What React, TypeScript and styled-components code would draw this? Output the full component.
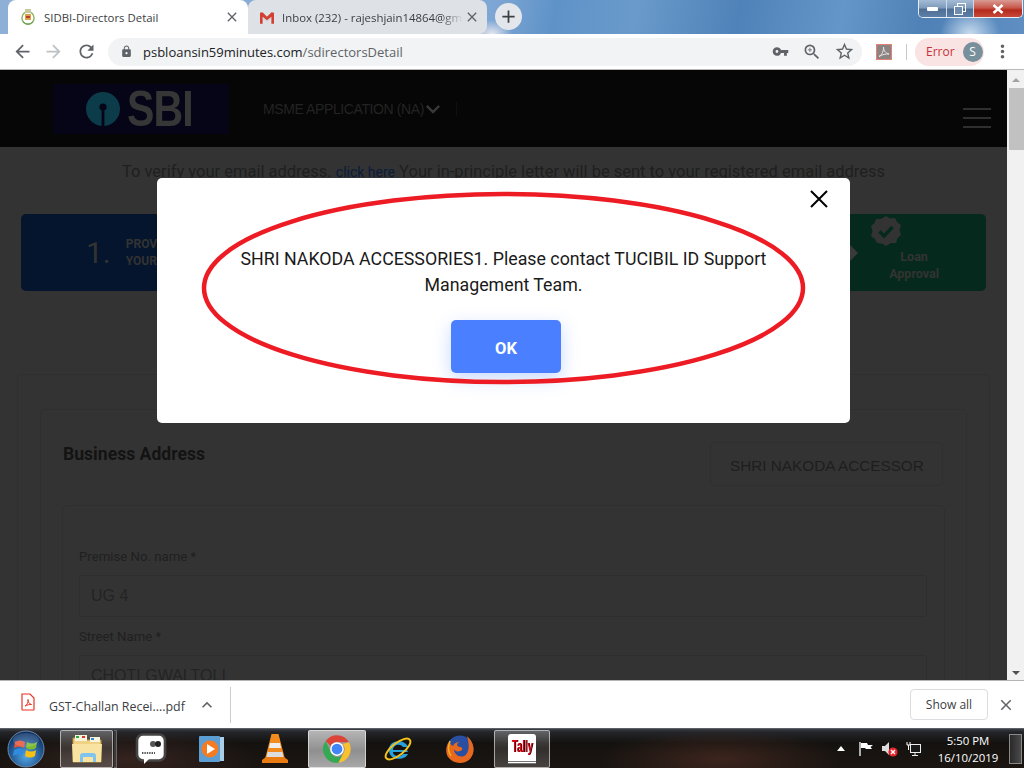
import React from 'react';
import styled, { createGlobalStyle } from 'styled-components';
import { MdArrowBack, MdArrowForward, MdRefresh, MdLock, MdVpnKey, MdZoomIn, MdStarBorder, MdMoreVert, MdClose, MdAdd, MdExpandLess, MdExpandMore } from 'react-icons/md';

const Global = createGlobalStyle`
  html, body { margin: 0; padding: 0; width: 1024px; height: 768px; overflow: hidden; background: #fff; }
  * { box-sizing: border-box; }
`;

const Screen = styled.div`
  width: 1024px; height: 768px; display: flex; flex-direction: column; overflow: hidden;
  font-family: Roboto, "Liberation Sans", sans-serif;
`;

/* ---------- tab strip ---------- */
const TabStrip = styled.div`
  height: 34px; flex: none; display: flex; align-items: flex-start; padding-left: 8px;
  background:
    radial-gradient(ellipse 30px 26px at 970px 34px, #c9dcef 0%, rgba(201,220,239,0) 100%),
    radial-gradient(ellipse 20px 14px at 492px 34px, #e6e6ee 0%, rgba(230,230,238,0) 100%),
    linear-gradient(100deg, #8fb0d6 0%, #8fb0d6 3%, #7ea6d4 48%, #5f93c8 54%, #6a9acb 62%, #4f82b8 72%, #6496c9 82%, #4f81b6 90%, #5f8fc2 100%);
`;
const Tab = styled.div<{ $active?: boolean }>`
  width: ${p => (p.$active ? 240 : 239)}px; height: 34px; display: flex; align-items: center;
  padding: 0 ${p => (p.$active ? 7 : 6)}px 0 ${p => (p.$active ? 13 : 12)}px;
  background: ${p => (p.$active ? '#fff' : '#dee1e6')};
  border-radius: 8px 8px ${p => (p.$active ? '0 0' : '8px 0')};
  flex: none;
`;
const TabIcon = styled.span<{ $gap: number }>`
  width: 16px; height: 18px; flex: none; display: flex; align-items: center; margin-right: ${p => p.$gap}px;
  svg { display: block; }
`;
const TabTitle = styled.span<{ $fade?: boolean }>`
  flex: 1; min-width: 0; white-space: nowrap; overflow: hidden; font: 11.4px "Open Sans", "Noto Sans", sans-serif; color: #3c4043;
  ${p => p.$fade ? 'mask-image: linear-gradient(90deg, #000 88%, transparent 100%);' : ''}
`;
const TabClose = styled.span`
  width: 18px; height: 18px; display: flex; align-items: center; justify-content: center; color: #5f6368; font-size: 16px; flex: none;
`;
const NewTab = styled.span`
  width: 27px; height: 27px; border-radius: 50%; background: #e3e6ea; color: #3c4043; display: flex; align-items: center; justify-content: center;
  font-size: 21px; margin: 3px 0 0 8px;
`;
const CaptionGroup = styled.div`
  margin: 0 1px 0 auto; height: 18px; width: 105px; display: flex; border: 1px solid #e8eef5; border-top: none; border-radius: 0 0 5px 5px; overflow: hidden;
`;
const CaptionButton = styled.span<{ $close?: boolean; $w: number }>`
  width: ${p => p.$w}px; flex: none; display: flex; align-items: center; justify-content: center; color: #fff;
  background: ${p => p.$close ? 'linear-gradient(#d99b93 0%, #c85a4d 45%, #b52a1c 60%, #c64a3a 100%)' : 'linear-gradient(#a4bcd6 0%, #7f9cbc 45%, #4f6f95 55%, #5d7ea6 100%)'};
  border-right: ${p => p.$close ? 'none' : '1px solid #cfdbe8'};
`;

/* ---------- toolbar ---------- */
const Toolbar = styled.div`
  height: 36px; flex: none; display: flex; align-items: center; background: #fff; border-bottom: 1px solid #b8b8b8;
`;
const NavButton = styled.span<{ $c?: string; $w?: number; $pl?: number }>`
  width: ${p => p.$w ?? 31}px; padding-left: ${p => p.$pl ?? 0}px; flex: none; display: flex; align-items: center; justify-content: center; font-size: 21px; color: ${p => p.$c ?? '#5f6368'};
`;
const Omnibox = styled.div`
  width: 754px; height: 28px; margin-left: 4px; flex: none; background: #f1f3f4; border-radius: 14px; display: flex; align-items: center; padding: 0 2px 0 10px;
`;
const LockIcon = styled.span`
  width: 16px; display: flex; justify-content: center; font-size: 13px; color: #5f6368; margin: 0 9px 0 0;
`;
const UrlText = styled.span`
  flex: 1; font: 13px "Open Sans", "Noto Sans", sans-serif; color: #202124; white-space: nowrap; padding-top: 1px;
  em { font-style: normal; color: #5f6368; }
`;
const OmniIcon = styled.span<{ $s?: number }>`
  width: 32px; flex: none; display: flex; align-items: center; justify-content: center; font-size: ${p => p.$s ?? 20}px; color: #5f6368;
`;
const ToolbarDivider = styled.span`
  width: 1px; height: 16px; background: #c9c9c9; flex: none; margin: 0 8px 0 14px;
`;
const PdfExt = styled.span`
  width: 16px; height: 16px; flex: none; margin-left: 14px; svg { display: block; }
`;
const ErrorPill = styled.div`
  width: 69px; height: 28px; flex: none; border-radius: 14px; background: #fae3e3; display: flex; align-items: center; padding-left: 11px; gap: 8px;
  font: 12px "Open Sans", "Noto Sans", sans-serif; color: #c5323a;
`;
const Avatar = styled.span`
  width: 20px; height: 20px; border-radius: 50%; background: #78909c; color: #fff; font-size: 12px; display: flex; align-items: center; justify-content: center;
`;

/* ---------- viewport ---------- */
const Viewport = styled.div`
  flex: 1; min-height: 0; display: flex; position: relative; overflow: hidden;
`;
const Page = styled.div`
  width: 1007px; flex: none; background: #333; overflow: hidden; display: flex; flex-direction: column;
`;
const SiteHeader = styled.div`
  height: 77px; flex: none; background: #060606; display: flex; align-items: center; padding: 0 16px 0 53px;
`;
const Logo = styled.div`
  width: 176px; height: 50px; flex: none; background: #050517; display: flex; align-items: center; padding-left: 33px; gap: 7px;
  font: 700 50px/50px "Liberation Sans", sans-serif; color: #363636; letter-spacing: -1px;
  svg { display: block; flex: none; }
  span { display: inline-block; transform: scaleX(.82); transform-origin: left center; }
`;
const AppMenu = styled.div`
  margin-left: 34px; display: flex; align-items: center; font: 14px "Liberation Sans", sans-serif; color: #232323; letter-spacing: -.4px;
  svg { font-size: 28px; margin-left: -5px; color: #383838; }
`;
const MenuRule = styled.span`
  width: 1px; height: 14px; background: #101010; margin-left: 9px; flex: none;
`;
const Burger = styled.div`
  margin: 18px 0 0 auto; width: 28px; display: flex; flex-direction: column; gap: 7px;
  i { display: block; height: 2px; background: #2f2f2f; }
`;
const Notice = styled.div`
  height: 67px; flex: none; padding-top: 15px; text-align: center; font-size: 16.5px; line-height: 20px; color: #1f1f1f;
  a { color: #0a1c38; font-size: 14px; }
`;
const Steps = styled.div`
  height: 77px; flex: none; margin: 0 21px; display: flex;
`;
const StepBlue = styled.div`
  width: 500px; flex: none; background: #05152d; border-radius: 5px 0 0 5px; display: flex; align-items: center; padding-left: 65px;
`;
const StepNo = styled.span`
  font-size: 30px; color: #333; margin-right: 15px;
`;
const StepText = styled.span`
  font-size: 12px; line-height: 17px; font-weight: 700; color: #333; white-space: nowrap;
`;
const StepGreen = styled.div`
  flex: 1; background: #06291d; border-radius: 0 5px 5px 0; position: relative; display: flex; flex-direction: column; align-items: flex-end; padding: 2px 47px 0 0;
`;
const Arrow = styled.span`
  position: absolute; left: 329px; top: 31px; width: 0; height: 0; border-left: 8px solid #3a3a3a; border-top: 8.5px solid transparent; border-bottom: 8.5px solid transparent;
`;
const Badge = styled.span`
  display: block; height: 30px; width: 100%; padding-left: 350px; svg { display: block; }
`;
const ApprovalText = styled.span`
  font-size: 12.5px; line-height: 17px; font-weight: 700; color: #333; text-align: center; margin-top: 2px;
`;
const OuterCard = styled.div`
  margin: 83px 17px 0; flex: 1; border: 1px solid #2f2f2f; border-radius: 5px 5px 0 0; padding: 34px 22px 0;
`;
const InnerCard = styled.div`
  height: 400px; border: 1px solid #2f2f2f; border-radius: 5px 5px 0 0; padding: 0 22px;
`;
const CardHead = styled.div`
  height: 95px; display: flex; justify-content: space-between; align-items: flex-start; padding-top: 32px;
`;
const CardTitle = styled.h2`
  margin: 1px 0 0; font-size: 17.6px; font-weight: 700; line-height: 22px; color: #131313;
`;
const CompanySelect = styled.div`
  width: 233px; height: 44px; border: 1px solid #2f2f2f; border-radius: 5px; margin-right: 1px; padding: 0 19px;
`;
const SelectValue = styled.div`
  height: 42px; font: 15.3px/46px "Liberation Sans", sans-serif; color: #1e1e1e; white-space: nowrap; overflow: hidden;
`;
const AddressCard = styled.div`
  border: 1px solid #2f2f2f; border-radius: 5px 5px 0 0; height: 300px; margin: 0 -1px; padding: 43px 17px 0 16px;
`;
const Label = styled.label`
  display: block; font-size: 13.2px; line-height: 16px; color: #202020; margin-bottom: 10px;
`;
const Field = styled.div`
  height: 42px; border: 1px solid #2e2e2e; border-radius: 3px; padding: 0 11px; font: 16px/39px "Liberation Sans", sans-serif; color: #232323; margin-bottom: 12px;
`;
const Scrollbar = styled.div`
  flex: 1; background: #f1f1f1; display: flex; flex-direction: column; align-items: center; padding-top: 6px; position: relative;
`;
const ScrollUp = styled.span`
  width: 0; height: 0; border: 4px solid transparent; border-top: none; border-bottom: 4px solid #a3a3a3; margin: 2px 0 0;
`;
const ScrollThumb = styled.span`
  width: 15px; height: 62px; background: #c1c1c1; margin: 6px 0 0 2px;
`;
const ScrollDown = styled.span`
  margin-top: auto; margin-bottom: 5px; width: 0; height: 0; border: 4px solid transparent; border-bottom: none; border-top: 4px solid #505050;
`;

/* ---------- modal ---------- */
const ModalLayer = styled.div`
  position: absolute; left: 0; top: 0; width: 1007px; height: 100%; display: flex; justify-content: center; padding-top: 108px;
`;
const Modal = styled.div`
  width: 693px; height: 245px; background: #fff; border-radius: 5px; position: relative; display: flex; flex-direction: column; align-items: center; padding-top: 68px;
`;
const CloseX = styled.span`
  position: absolute; right: 21px; top: 11px; width: 20px; height: 20px; svg { display: block; }
`;
const Message = styled.p`
  margin: 0; width: 560px; text-align: center; font-size: 17.8px; line-height: 26px; color: #1a1a1a; position: relative;
`;
const OkButton = styled.button`
  margin: 22px 0 0 5px; width: 110px; height: 53px; border: none; border-radius: 5px; background: #4a80ff; color: #fff; font: 700 16.5px Roboto, sans-serif; padding: 3px 0 0;
  box-shadow: 0 6px 18px rgba(74,128,255,.3);
`;
const Annotation = styled.svg`
  position: absolute; left: 43px; top: 11px; pointer-events: none;
`;

/* ---------- download bar ---------- */
const DownloadBar = styled.div`
  height: 48px; flex: none; background: #fff; border-top: 1px solid #b5b5b5; display: flex; align-items: center;
`;
const FileIcon = styled.span`
  width: 14px; height: 18px; margin: -6px 14px 0 21px; flex: none; svg { display: block; }
`;
const FileName = styled.span`
  font: 12.4px "Open Sans", "Noto Sans", sans-serif; color: #3c4043; width: 144px; white-space: nowrap; padding-top: 4px;
`;
const Chevron = styled.span`
  width: 20px; font-size: 20px; display: flex; justify-content: center; color: #5f6368; flex: none; margin-left: 4px;
`;
const BarDivider = styled.span`
  width: 1px; height: 36px; background: #ccc; margin-left: 13px; flex: none;
`;
const ShowAll = styled.button`
  margin-left: auto; width: 78px; height: 31px; background: #fff; border: 1px solid #dadce0; border-radius: 4px; font: 12px "Open Sans", "Noto Sans", sans-serif; color: #3c4043; padding: 0;
`;
const BarClose = styled.span`
  width: 36px; display: flex; justify-content: center; color: #5f6368; font-size: 18px; flex: none;
`;

/* ---------- taskbar ---------- */
const Taskbar = styled.div`
  height: 40px; flex: none; display: flex; align-items: center; color: #fff; position: relative;
  background:
    radial-gradient(ellipse 120px 30px at 720px 30px, rgba(90,50,40,.55), transparent),
    radial-gradient(ellipse 130px 30px at 130px 30px, rgba(80,50,45,.5), transparent),
    linear-gradient(#3b3e44 0, #23252a 3px, #14120f 14px, #1b1511 100%);
  border-top: 1px solid #5c6068;
`;
const Orb = styled.span`
  width: 38px; height: 38px; flex: none; margin: 0 15px 0 7px; svg { display: block; }
`;
const TaskItem = styled.span<{ $w: number; $on?: boolean; $ml?: number }>`
  width: ${p => p.$w}px; height: 38px; flex: none; margin-left: ${p => p.$ml ?? 0}px; display: flex; align-items: center; justify-content: center;
  border-radius: 2px;
  ${p => p.$on ? 'background: linear-gradient(rgba(255,255,255,.28), rgba(255,255,255,.12) 50%, rgba(255,255,255,.2)); border: 1px solid rgba(255,255,255,.55);' : ''}
  svg { display: block; }
`;
const Grip = styled.span`
  width: 3px; height: 38px; flex: none; margin-left: 1px; background: #3a3a3d; border: 1px solid #66686c; border-left: none;
`;
const OnChrome = styled(TaskItem)`
  background: linear-gradient(#b5b5b5, #8f8f8f 55%, #a8a8a8);
`;
const TallyBook = styled.span`
  width: 28px; height: 30px; background: #fff; border-radius: 3px 3px 0 0; border-bottom: 3px double #777; overflow: hidden; display: flex; align-items: center; justify-content: center;
`;
const TallyWord = styled.span`
  display: block; color: #e00014; font: 700 12px/14px "Liberation Sans", sans-serif; transform: scale(.8, 1.35); text-shadow: 1px 0 0 #000;
`;
const Tray = styled.div`
  margin-left: auto; display: flex; align-items: center; height: 100%;
`;
const TrayIcon = styled.span<{ $w?: number }>`
  width: ${p => p.$w ?? 24}px; flex: none; display: flex; justify-content: center; svg { display: block; }
`;
const Clock = styled.div`
  width: 78px; margin-left: 2px; padding-top: 1px; text-align: center; font: 11.4px/17px "Open Sans", "Noto Sans", sans-serif; color: #fff; flex: none;
`;
const ShowDesktop = styled.span`
  width: 13px; height: 30px; flex: none; margin: 0 2px; background: linear-gradient(90deg, #2a2a2a, #4a4a4a); border: 1px solid #8a8a8a;
`;

/* ---------- drawn icons ---------- */
const SidbiIcon = () => (
  <svg width="14" height="18" viewBox="0 0 14 18">
    <ellipse cx="7" cy="10" rx="6" ry="6.5" fill="none" stroke="#8fb56a" strokeWidth="1.5" />
    <rect x="4" y="1" width="6" height="4" fill="#c7c7a0" />
    <rect x="4" y="6" width="6" height="6" fill="#d9a24c" />
    <rect x="5" y="8" width="4" height="2" fill="#c0392b" />
    <path d="M2 14 Q7 18 12 14" stroke="#5f9e4d" fill="none" />
  </svg>
);
const GmailIcon = () => (
  <svg width="14" height="13" viewBox="0 0 16 14">
    <path d="M0 1.5 L2.8 1 L8 6 L13.2 1 L16 1.5 V14 H13 V6 L8 10 L3 6 V14 H0 Z" fill="#d23f31" />
    <path d="M3 6 L8 10 L13 6 V8.5 L8 12 L3 8.5Z" fill="#b9b9b9" opacity=".3" />
  </svg>
);
const AcrobatExt = () => (
  <svg width="16" height="16" viewBox="0 0 16 16">
    <rect x=".5" y=".5" width="15" height="15" fill="#8a8583" stroke="#e47f76" />
    <path d="M3 12.5 C6 11 8 6 7.5 3 C7.5 6 9 9 13 10 C10 9.6 6.5 10.5 3 12.5Z" fill="none" stroke="#efe6e4" strokeWidth="1" />
  </svg>
);
const SbiMark = () => (
  <svg width="34" height="36" viewBox="0 0 34 36">
    <circle cx="17" cy="18" r="17" fill="#0c3b4a" />
    <circle cx="17" cy="16" r="3.6" fill="#050517" />
    <rect x="15.6" y="16" width="2.8" height="20" fill="#050517" />
  </svg>
);
const CheckBadge = () => (
  <svg width="30" height="30" viewBox="0 0 30 30">
    <path d="M15 0 L19 2.5 L24 2 L26 6 L30 9 L28.5 14 L30 19 L26.5 22 L25 27 L20 27 L15 30 L11 27.5 L6 27 L4 23 L0 20 L1.5 15 L0 10 L3.5 7 L5 3 L10 3 Z" fill="#333" />
    <path d="M8.5 15.5 L13 20 L21.5 11" fill="none" stroke="#06291d" strokeWidth="3.4" />
  </svg>
);
const PdfFile = () => (
  <svg width="14" height="18" viewBox="0 0 14 18">
    <path d="M1 1 H9 L13 5 V16.5 Q13 17 12.5 17 H1.5 Q1 17 1 16.5 Z" fill="#fff" stroke="#ea3323" strokeWidth="1.2" />
    <path d="M4 13 C6 12 7.5 9 7 6.5 C7 9 8.5 11 10.5 11.5 C8.5 11.3 6 12 4 13Z" fill="none" stroke="#ea3323" />
  </svg>
);
const WinOrb = () => (
  <svg width="38" height="38" viewBox="0 0 38 38">
    <defs>
      <radialGradient id="orbg" cx="50%" cy="70%" r="65%"><stop offset="0" stopColor="#52a7e8" /><stop offset="1" stopColor="#0b2f63" /></radialGradient>
    </defs>
    <circle cx="19" cy="19" r="18" fill="url(#orbg)" stroke="#6f8aa6" />
    <path d="M8 12 Q13 9 18 12 L17 18 Q12 15 7 18Z" fill="#e8543a" />
    <path d="M20 12 Q25 15 30 12 L29 18 Q24 21 19 18Z" fill="#7cbb2e" />
    <path d="M7 20 Q12 17 16.5 20 L15.5 26 Q11 23 6 26Z" fill="#2f8be0" />
    <path d="M19 20 Q24 23 29 20 L28 26 Q23 29 18 26Z" fill="#f8c013" />
    <ellipse cx="19" cy="10" rx="13" ry="7" fill="#fff" opacity=".14" />
  </svg>
);
const FolderIcon = () => (
  <svg width="32" height="30" viewBox="0 0 32 30">
    <path d="M2 4 H12 L14 6 H30 V28 H2Z" fill="#f0d183" stroke="#b9953f" />
    <rect x="4" y="1" width="12" height="6" fill="#f7f4dc" />
    <rect x="5" y="2" width="3" height="2" fill="#2eaa3a" />
    <rect x="11" y="2" width="3" height="2" fill="#d33" />
    <rect x="19" y="3" width="10" height="5" fill="#f7f4dc" />
    <rect x="20" y="4" width="3" height="2" fill="#3a85d8" />
    <path d="M1 10 H31 L30 28 H2Z" fill="#f9e3a3" />
    <path d="M9 28 V22 Q9 19 12 19 H22 Q25 19 25 22 V28 H22 V23 H12 V28Z" fill="#7fc4ee" />
  </svg>
);
const ChatIcon = () => (
  <svg width="32" height="32" viewBox="0 0 32 32">
    <rect x="2" y="1.5" width="28" height="26" rx="6" fill="#fff" stroke="#444" strokeWidth="2.6" />
    <path d="M9 26 V31 L14 26Z" fill="#fff" />
    <circle cx="18" cy="11" r="3" fill="#555" /><circle cx="23" cy="11" r="3" fill="#222" />
    <path d="M7 20 H20" stroke="#555" strokeWidth="2" strokeDasharray="1.4 1" />
  </svg>
);
const WmpIcon = () => (
  <svg width="26" height="28" viewBox="0 0 26 28">
    <rect x="3" y="2" width="22" height="24" fill="#a9cfe8" />
    <rect x="0" y="1" width="21" height="26" rx="1" fill="#5c9ed3" />
    <circle cx="11" cy="14" r="8.5" fill="#f47b20" />
    <path d="M8 9 L16 14 L8 19Z" fill="#fff" />
  </svg>
);
const VlcIcon = () => (
  <svg width="28" height="32" viewBox="0 0 28 32">
    <path d="M10.5 1 H17.5 L24 26 H4Z" fill="#f28c1e" />
    <path d="M9 10 H19 L20 15 H8Z" fill="#eee" />
    <path d="M6.6 19 H21.4 L22.4 24 H5.6Z" fill="#ddd" />
    <path d="M1 27 L5 24 H23 L27 27 V30 H1Z" fill="#ea7a12" />
  </svg>
);
const ChromeIcon = () => (
  <svg width="30" height="30" viewBox="0 0 48 48">
    <path d="M24 2 A22 22 0 0 1 43 13 H24 A11 11 0 0 0 14 19 L6 11 A22 22 0 0 1 24 2Z" fill="#db4437" />
    <path d="M43 13 A22 22 0 0 1 26 46 L35 29 A11 11 0 0 0 33 16 Z" fill="#fbc02d" />
    <path d="M6 11 A22 22 0 0 0 26 46 L35 29 A11 11 0 0 1 14 29 Z" fill="#34a853" />
    <circle cx="24" cy="24" r="11" fill="#fff" />
    <circle cx="24" cy="24" r="8.6" fill="#4285f4" />
  </svg>
);
const IeIcon = () => (
  <svg width="32" height="32" viewBox="0 0 32 32">
    <path d="M24 17 H10 C10 12 17 10 20 14 H25 C22 6 6 6 6 17 C6 28 22 28 25 21 H20 C17 25 10 23 10 19 H25 Z" fill="#27a2df" />
    <ellipse cx="15" cy="16" rx="15" ry="6" fill="none" stroke="#f6c21a" strokeWidth="2" transform="rotate(-38 15 16)" />
  </svg>
);
const FirefoxIcon = () => (
  <svg width="30" height="30" viewBox="0 0 30 30">
    <circle cx="15" cy="15" r="13.5" fill="#2b4fa0" />
    <path d="M22 2 C29 8 31 18 25 25 C19 31 8 30 3 23 C0 18 1 11 5 7 C5 10 6 11 8 12 C9 9 12 8 14 8 C11 10 12 13 15 13 C18 13 18 16 15 17 C12 18 10 17 9 15 C9 20 14 24 19 22 C24 20 25 11 22 2Z" fill="#e8681d" />
    <path d="M5 7 C3 12 3 18 6 22" stroke="#f6b01e" strokeWidth="1.5" fill="none" />
  </svg>
);
const FlagIcon = () => (
  <svg width="16" height="16" viewBox="0 0 16 16">
    <path d="M2 1 V15" stroke="#fff" strokeWidth="1.3" />
    <path d="M3 2 H9 L10 4 H15 L12.5 6 L14 8 H8 L7 7 H3Z" fill="#fff" />
  </svg>
);
const SpeakerIcon = () => (
  <svg width="18" height="16" viewBox="0 0 18 16">
    <path d="M1 5 H4 L8 1 V14 L4 10 H1Z" fill="#dcdcdc" />
    <circle cx="12" cy="11" r="4.6" fill="#e3262e" />
    <path d="M10 9 L14 13 M14 9 L10 13" stroke="#fff" strokeWidth="1.4" />
  </svg>
);
const NetworkIcon = () => (
  <svg width="16" height="16" viewBox="0 0 16 16">
    <rect x="4.5" y="3.5" width="10" height="8" fill="#1a1a1a" stroke="#eee" />
    <path d="M9 12 V14 M6 14.5 H12" stroke="#eee" />
    <path d="M1 1 V4 H4 V1 M2.5 4 V9" stroke="#fff" fill="none" />
  </svg>
);

export default function App() {
  return (
    <Screen>
      <Global />
      <TabStrip>
        <Tab $active>
          <TabIcon $gap={7}><SidbiIcon /></TabIcon>
          <TabTitle>SIDBI-Directors Detail</TabTitle>
          <TabClose><MdClose /></TabClose>
        </Tab>
        <Tab>
          <TabIcon $gap={6}><GmailIcon /></TabIcon>
          <TabTitle $fade>Inbox (232) - rajeshjain14864@gmail.com</TabTitle>
          <TabClose><MdClose /></TabClose>
        </Tab>
        <NewTab><MdAdd /></NewTab>
        <CaptionGroup>
          <CaptionButton $w={28}><svg width="11" height="4" viewBox="0 0 11 4"><rect width="11" height="4" rx="1" fill="#fff" /></svg></CaptionButton>
          <CaptionButton $w={27}><svg width="12" height="12" viewBox="0 0 12 12"><rect x="3.5" y=".5" width="8" height="8" fill="none" stroke="#fff" /><rect x=".5" y="3.5" width="8" height="8" fill="#6f8db0" stroke="#fff" /></svg></CaptionButton>
          <CaptionButton $close $w={48}><svg width="12" height="10" viewBox="0 0 12 10"><path d="M1.5 1 L10.5 9 M10.5 1 L1.5 9" stroke="#fff" strokeWidth="2.6" /></svg></CaptionButton>
        </CaptionGroup>
      </TabStrip>

      <Toolbar>
        <NavButton $w={38} $pl={6}><MdArrowBack /></NavButton>
        <NavButton $c="#bdc1c6" $w={30}><MdArrowForward /></NavButton>
        <NavButton $w={36}><MdRefresh /></NavButton>
        <Omnibox>
          <LockIcon><MdLock /></LockIcon>
          <UrlText>psbloansin59minutes.com<em>/sdirectorsDetail</em></UrlText>
          <OmniIcon $s={17}><MdVpnKey /></OmniIcon>
          <OmniIcon $s={20}><MdZoomIn /></OmniIcon>
          <OmniIcon $s={21}><MdStarBorder /></OmniIcon>
        </Omnibox>
        <PdfExt><AcrobatExt /></PdfExt>
        <ToolbarDivider />
        <ErrorPill>Error<Avatar>S</Avatar></ErrorPill>
        <NavButton $w={36}><MdMoreVert /></NavButton>
      </Toolbar>

      <Viewport>
        <Page>
          <SiteHeader>
            <Logo><SbiMark /><span>SBI</span></Logo>
            <AppMenu>MSME APPLICATION (NA)<MdExpandMore /><MenuRule /></AppMenu>
            <Burger><i /><i /><i /></Burger>
          </SiteHeader>
          <Notice>To verify your email address. <a>click here</a> Your in-principle letter will be sent to your registered email address</Notice>
          <Steps>
            <StepBlue>
              <StepNo>1.</StepNo>
              <StepText>PROVIDE<br />YOUR DETAILS</StepText>
            </StepBlue>
            <StepGreen>
              <Arrow />
              <Badge><CheckBadge /></Badge>
              <ApprovalText>Loan<br />Approval</ApprovalText>
            </StepGreen>
          </Steps>
          <OuterCard>
            <InnerCard>
              <CardHead>
                <CardTitle>Business Address</CardTitle>
                <CompanySelect><SelectValue>SHRI NAKODA ACCESSORIES1</SelectValue></CompanySelect>
              </CardHead>
              <AddressCard>
                <Label>Premise No. name *</Label>
                <Field>UG 4</Field>
                <Label>Street Name *</Label>
                <Field>CHOTI GWALTOLI</Field>
              </AddressCard>
            </InnerCard>
          </OuterCard>
        </Page>
        <Scrollbar>
          <ScrollUp />
          <ScrollThumb />
          <ScrollDown />
        </Scrollbar>
        <ModalLayer>
          <Modal>
            <CloseX>
              <svg width="20" height="20" viewBox="0 0 20 20"><path d="M2 2 L18 18 M18 2 L2 18" stroke="#000" strokeWidth="2" /></svg>
            </CloseX>
            <Annotation width="608" height="196" viewBox="0 0 608 196">
              <ellipse cx="303.5" cy="99" rx="299.5" ry="94" fill="none" stroke="#ed1c24" strokeWidth="4.5" />
            </Annotation>
            <Message>SHRI NAKODA ACCESSORIES1. Please contact TUCIBIL ID Support Management Team.</Message>
            <OkButton>OK</OkButton>
          </Modal>
        </ModalLayer>
      </Viewport>

      <DownloadBar>
        <FileIcon><PdfFile /></FileIcon>
        <FileName>GST-Challan Recei....pdf</FileName>
        <Chevron><MdExpandLess /></Chevron>
        <BarDivider />
        <ShowAll>Show all</ShowAll>
        <BarClose><MdClose /></BarClose>
      </DownloadBar>

      <Taskbar>
        <Orb><WinOrb /></Orb>
        <TaskItem $w={53} $on><FolderIcon /></TaskItem>
        <Grip />
        <TaskItem $w={56} $ml={6}><ChatIcon /></TaskItem>
        <TaskItem $w={60} $ml={3}><WmpIcon /></TaskItem>
        <TaskItem $w={66}><VlcIcon /></TaskItem>
        <OnChrome $w={58} $on><ChromeIcon /></OnChrome>
        <TaskItem $w={66}><IeIcon /></TaskItem>
        <TaskItem $w={56}><FirefoxIcon /></TaskItem>
        <TaskItem $w={56} $on $ml={6}><TallyBook><TallyWord>Tally</TallyWord></TallyBook></TaskItem>
        <Tray>
          <TrayIcon $w={24}><svg width="8" height="5" viewBox="0 0 8 5"><path d="M4 0 L8 5 H0Z" fill="#fff" /></svg></TrayIcon>
          <TrayIcon $w={26}><FlagIcon /></TrayIcon>
          <TrayIcon $w={22}><SpeakerIcon /></TrayIcon>
          <TrayIcon $w={26}><NetworkIcon /></TrayIcon>
          <Clock>5:50 PM<br />16/10/2019</Clock>
          <ShowDesktop />
        </Tray>
      </Taskbar>
    </Screen>
  );
}
